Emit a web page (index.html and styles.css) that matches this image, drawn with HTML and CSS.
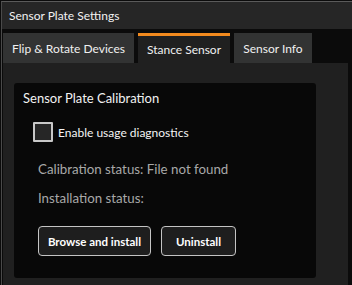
FILE: index.html
```html
<!DOCTYPE html>
<html>
<head>
<meta charset="utf-8">
<link rel="stylesheet" href="styles.css">
</head>
<body>
<div class="window">
  <div class="titlebar">Sensor Plate Settings</div>
  <div class="tabs">
    <div class="tab tab-flip">Flip &amp; Rotate Devices</div>
    <div class="tab tab-stance active">Stance Sensor</div>
    <div class="tab tab-info">Sensor Info</div>
  </div>
  <div class="panel">
    <div class="card">
      <div class="card-title">Sensor Plate Calibration</div>
      <label class="check-row">
        <span class="checkbox"></span>
        <span class="check-label">Enable usage diagnostics</span>
      </label>
      <div class="status status-first">Calibration status: File not found</div>
      <div class="status">Installation status:</div>
      <div class="buttons">
        <button class="btn btn-browse">Browse and install</button>
        <button class="btn btn-uninstall">Uninstall</button>
      </div>
    </div>
  </div>
</div>
</body>
</html>
```
FILE: styles.css
```css
html, body {
  margin: 0;
  padding: 0;
  background: #0b0b0b;
  width: 352px;
  height: 285px;
  overflow: hidden;
  font-family: "Lato", "Noto Sans", sans-serif;
  font-size: 12px;
  color: #f0f0f0;
}

.window {
  margin: 1px 0 0 1px;
  border-top: 1px solid #5a5a5a;
  border-left: 1px solid #4a4a4a;
  height: 283px;
  background: #0b0b0b;
}

.titlebar {
  height: 27px;
  line-height: 27px;
  background: #262626;
  padding-left: 7px;
  font-size: 12px;
  color: #f2f2f2;
}

.tabs {
  display: flex;
  gap: 4px;
  margin-top: 4px;
  padding-left: 1px;
  height: 30px;
}

.tab {
  height: 30px;
  line-height: 32px;
  text-align: center;
  background: #323333;
  font-size: 12px;
  color: #f0f0f0;
  box-sizing: border-box;
}

.tab-flip { width: 131px; }
.tab-stance { width: 92px; }
.tab-info { width: 78px; }

.tab.active {
  background: #202020;
  border-top: 3px solid #f28a1e;
  line-height: 27px;
}

.panel {
  margin-left: 1px;
  width: 345px;
  height: 222px;
  background: #202020;
  padding: 20px 0 0 11px;
  box-sizing: border-box;
}

.card {
  width: 302px;
  height: 195px;
  background: #080808;
  border-radius: 3px;
  padding: 7px 0 0 9px;
  box-sizing: border-box;
}

.card-title {
  line-height: 16px;
  font-size: 13px;
  color: #f2f2f2;
}

.check-row {
  display: flex;
  align-items: center;
  margin-top: 16px;
  margin-left: 10px;
  height: 20px;
}

.checkbox {
  width: 20px;
  height: 20px;
  box-sizing: border-box;
  border: 2px solid #c8c8c8;
  background: #262626;
  border-radius: 1px;
}

.check-label {
  margin-left: 5px;
  font-size: 12px;
  color: #f4f4f4;
}

.status {
  margin-left: 15px;
  line-height: 16px;
  margin-top: 13px;
  font-size: 13.3px;
  color: #a8a8a8;
}

.status-first {
  margin-top: 19px;
}

.buttons {
  display: flex;
  gap: 10px;
  margin-top: 20px;
  margin-left: 15px;
}

.btn {
  height: 30px;
  box-sizing: border-box;
  border: 1px solid #c4c4c4;
  border-radius: 4px;
  background: #1e1e1e;
  color: #ffffff;
  font-family: inherit;
  font-size: 11.5px;
  font-weight: 700;
  padding: 0;
}

.btn-browse { width: 113px; }
.btn-uninstall { width: 75px; }
```
